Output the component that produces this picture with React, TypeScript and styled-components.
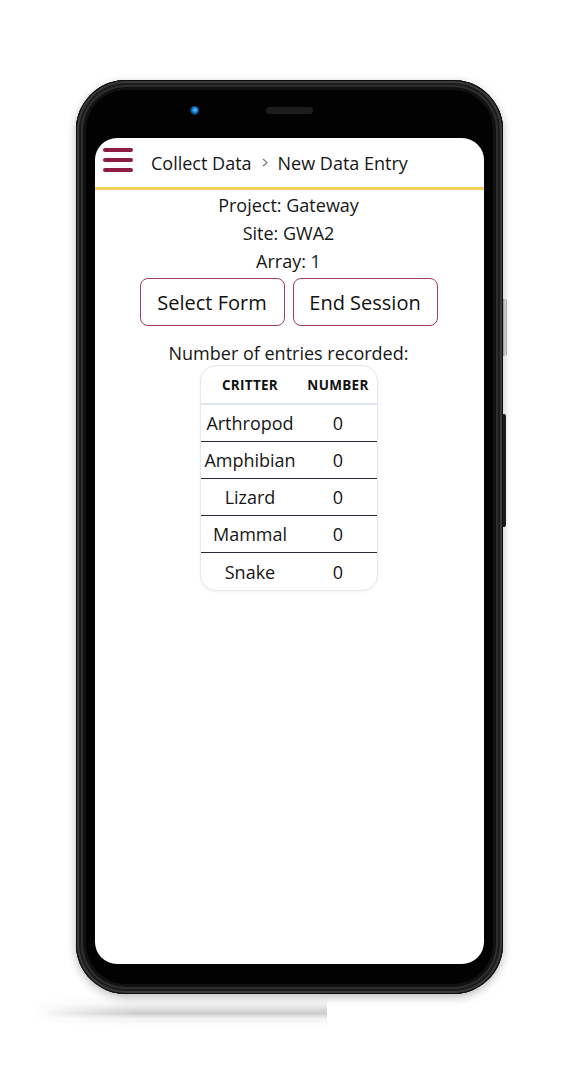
import React from "react";
import styled, { createGlobalStyle } from "styled-components";

const GlobalStyle = createGlobalStyle`
  html, body { margin: 0; padding: 0; background: #ffffff; }
  body { font-family: "Open Sans", "Noto Sans", sans-serif; color: #161616; }
  * { box-sizing: border-box; }
`;

const Page = styled.div`
  width: 586px;
  height: 1083px;
  padding: 80px 0 0 76px;
  display: flex;
  flex-direction: column;
  overflow: hidden;
  background: #ffffff;
`;

const DeviceRow = styled.div`
  display: flex;
  align-items: flex-start;
`;

const Phone = styled.div`
  width: 427px;
  height: 914px;
  border-radius: 50px;
  background: #020202;
  padding: 0 19px 30px;
  display: flex;
  flex-direction: column;
  box-shadow:
    inset 0 0 0 1px #0c0c0c,
    inset 0 0 0 3px #3a3a3a,
    inset 0 0 0 5px #1c1c1c,
    inset 0 0 0 7px #2e2e2e,
    inset 0 0 0 10px #111111,
    0 3px 10px rgba(0, 0, 0, 0.28);
`;

const TopBezel = styled.div`
  height: 58px;
  flex: none;
  display: flex;
  align-items: center;
  padding: 2px 0 0 95px;
`;

const Camera = styled.div`
  width: 9px;
  height: 9px;
  border-radius: 50%;
  background: radial-gradient(circle at 55% 45%, #5cc8ff 0, #1686d8 35%, #0b3a66 60%, #101418 100%);
`;

const Speaker = styled.div`
  width: 47px;
  height: 7px;
  margin-left: 67px;
  border-radius: 4px;
  background: #1d1d1d;
`;

const SideKeys = styled.div`
  display: flex;
  flex-direction: column;
  padding-top: 219px;
  gap: 58px;
`;

const Key = styled.div<{ $tall?: boolean }>`
  width: ${(p) => (p.$tall ? "3px" : "4px")};
  height: ${(p) => (p.$tall ? "113px" : "57px")};
  border-radius: 0 2px 2px 0;
  background: ${(p) =>
    p.$tall ? "#1a1a1a" : "linear-gradient(to right, #8d8d8d, #d6d6d6, #a4a4a4)"};
`;

const Screen = styled.div`
  flex: 1;
  background: #ffffff;
  border-radius: 22px;
  overflow: hidden;
  display: flex;
  flex-direction: column;
`;

const Header = styled.header`
  height: 52px;
  flex: none;
  display: flex;
  align-items: center;
  padding-left: 8px;
  border-bottom: 3px solid #f7cf5f;
`;

const Hamburger = styled.div`
  width: 30px;
  display: flex;
  flex-direction: column;
  gap: 6px;
  margin-bottom: 6px;
`;

const Bar = styled.span`
  display: block;
  height: 4px;
  border-radius: 2px;
  background: #8c1d40;
`;

const Crumb = styled.span<{ $first?: boolean }>`
  font-size: 18px;
  color: #161616;
  margin-left: ${(p) => (p.$first ? "18px" : "0")};
`;

const Chevron = styled.svg`
  width: 6px;
  height: 9px;
  margin: 0 10px 1px 10px;
`;

const Content = styled.main`
  display: flex;
  flex-direction: column;
  align-items: center;
  padding: 1px 2px 0 0;
`;

const InfoLine = styled.div`
  font-size: 18px;
  line-height: 28px;
  color: #161616;
`;

const ButtonRow = styled.div`
  display: flex;
  gap: 8px;
  margin-top: 3px;
`;

const ActionButton = styled.button`
  width: 145px;
  height: 48px;
  border: 1px solid #a03f5e;
  border-radius: 8px;
  background: #ffffff;
  font-family: "Open Sans", "Noto Sans", sans-serif;
  font-size: 20px;
  color: #111111;
  padding: 0;
`;

const EntriesLabel = styled.div`
  margin-top: 15px;
  font-size: 18px;
  line-height: 24px;
  color: #161616;
`;

const TableCard = styled.div`
  width: 178px;
  border: 1px solid #e7e7e7;
  border-radius: 16px;
  overflow: hidden;
  box-shadow: 0 1px 3px rgba(0, 0, 0, 0.05);
`;

const HeadRow = styled.div`
  display: grid;
  grid-template-columns: 99px 77px;
  height: 39px;
  border-bottom: 2px solid #dfe5ee;
  align-items: center;
`;

const HeadCell = styled.div`
  text-align: center;
  font-size: 13.5px;
  font-weight: 700;
  letter-spacing: 0.3px;
  color: #121212;
  text-transform: uppercase;
`;

const BodyRow = styled.div<{ $last?: boolean }>`
  display: grid;
  grid-template-columns: 99px 77px;
  height: 37px;
  align-items: center;
  border-bottom: ${(p) => (p.$last ? "none" : "1px solid #2a2a3a")};
`;

const Cell = styled.div`
  text-align: center;
  font-size: 18px;
  color: #161616;
  white-space: nowrap;
`;

const FloorShadow = styled.div`
  width: 293px;
  height: 30px;
  margin: 2px 0 0 -42px;
  background: linear-gradient(
    to bottom,
    rgba(0, 0, 0, 0) 0%,
    rgba(0, 0, 0, 0.04) 25%,
    rgba(0, 0, 0, 0.2) 58%,
    rgba(0, 0, 0, 0.05) 75%,
    rgba(0, 0, 0, 0) 100%
  );
  -webkit-mask-image: linear-gradient(to right, transparent 0, rgba(0,0,0,0.5) 15%, #000 35%, #000 100%);
  mask-image: linear-gradient(to right, transparent 0, rgba(0,0,0,0.5) 15%, #000 35%, #000 100%);
`;

const critters = [
  { name: "Arthropod", count: 0 },
  { name: "Amphibian", count: 0 },
  { name: "Lizard", count: 0 },
  { name: "Mammal", count: 0 },
  { name: "Snake", count: 0 },
];

export default function App() {
  return (
    <>
      <GlobalStyle />
      <Page>
        <DeviceRow>
          <Phone>
            <TopBezel>
              <Camera />
              <Speaker />
            </TopBezel>
            <Screen>
              <Header>
                <Hamburger>
                  <Bar />
                  <Bar />
                  <Bar />
                </Hamburger>
                <Crumb $first>Collect Data</Crumb>
                <Chevron viewBox="0 0 6 9">
                  <path d="M1 1 L5 4.5 L1 8" fill="none" stroke="#7a7a7a" strokeWidth="1.2" />
                </Chevron>
                <Crumb>New Data Entry</Crumb>
              </Header>
              <Content>
                <InfoLine>Project: Gateway</InfoLine>
                <InfoLine>Site: GWA2</InfoLine>
                <InfoLine>Array: 1</InfoLine>
                <ButtonRow>
                  <ActionButton>Select Form</ActionButton>
                  <ActionButton>End Session</ActionButton>
                </ButtonRow>
                <EntriesLabel>Number of entries recorded:</EntriesLabel>
                <TableCard>
                  <HeadRow>
                    <HeadCell>Critter</HeadCell>
                    <HeadCell>Number</HeadCell>
                  </HeadRow>
                  {critters.map((c, i) => (
                    <BodyRow key={c.name} $last={i === critters.length - 1}>
                      <Cell>{c.name}</Cell>
                      <Cell>{c.count}</Cell>
                    </BodyRow>
                  ))}
                </TableCard>
              </Content>
            </Screen>
          </Phone>
          <SideKeys>
            <Key />
            <Key $tall />
          </SideKeys>
        </DeviceRow>
        <FloorShadow />
      </Page>
    </>
  );
}
